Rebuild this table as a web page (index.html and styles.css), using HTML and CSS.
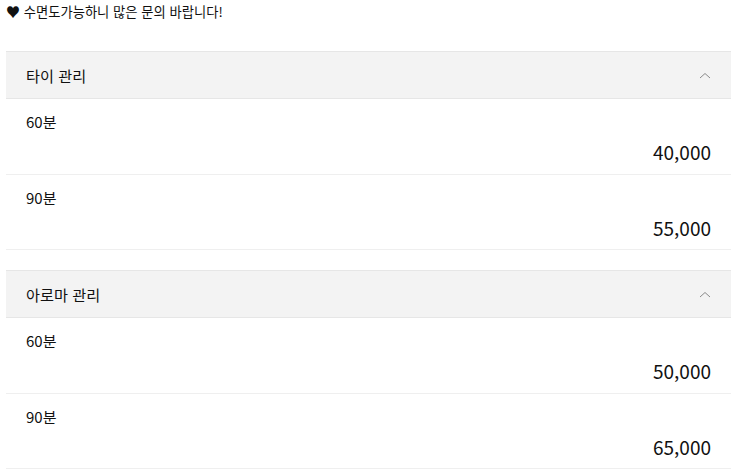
FILE: index.html
```html
<!DOCTYPE html>
<html lang="ko">
<head>
<meta charset="utf-8">
<link rel="stylesheet" href="styles.css">
</head>
<body>
<p class="note"><span class="heart">♥</span> 수면도가능하니 많은 문의 바랍니다!</p>
<div class="menu">
  <section class="group">
    <div class="group-head">
      <span class="group-title">타이 관리</span>
      <svg class="chev" width="12" height="7" viewBox="0 0 12 7"><path d="M1 6 L6 1.5 L11 6" fill="none" stroke="#8a8a8a" stroke-width="1"/></svg>
    </div>
    <div class="item"><div class="item-name">60분</div><div class="item-price">40,000</div></div>
    <div class="item"><div class="item-name">90분</div><div class="item-price">55,000</div></div>
  </section>
  <section class="group">
    <div class="group-head">
      <span class="group-title">아로마 관리</span>
      <svg class="chev" width="12" height="7" viewBox="0 0 12 7"><path d="M1 6 L6 1.5 L11 6" fill="none" stroke="#8a8a8a" stroke-width="1"/></svg>
    </div>
    <div class="item"><div class="item-name">60분</div><div class="item-price">50,000</div></div>
    <div class="item"><div class="item-name">90분</div><div class="item-price">65,000</div></div>
  </section>
</div>
</body>
</html>
```
FILE: styles.css
```css
html, body {
  margin: 0;
  padding: 0;
  background: #fff;
}
body {
  padding: 1px 5px 0 6px;
  font-family: "Noto Sans CJK KR", "Noto Sans", sans-serif;
  color: #111;
}
.note {
  margin: 0;
  font-size: 13.3px;
  line-height: 20px;
  color: #111;
}
.heart {
  font-size: 14px;
}
.menu {
  margin-top: 29px;
}
.group + .group {
  margin-top: 20px;
}
.group-head {
  display: flex;
  align-items: center;
  justify-content: space-between;
  height: 46px;
  padding: 0 20px;
  background: #f3f3f3;
  border-top: 1px solid #e6e6e6;
  border-bottom: 1px solid #e6e6e6;
}
.group-title {
  font-size: 15.2px;
  color: #111;
}
.chev {
  display: block;
  margin-top: 1px;
}
.item {
  padding: 12px 20px 7.5px;
  border-bottom: 1px solid #efefef;
}
.item-name {
  font-size: 15px;
  line-height: 22px;
}
.item-price {
  margin-top: 5px;
  font-size: 19px;
  line-height: 28px;
  text-align: right;
}
```
